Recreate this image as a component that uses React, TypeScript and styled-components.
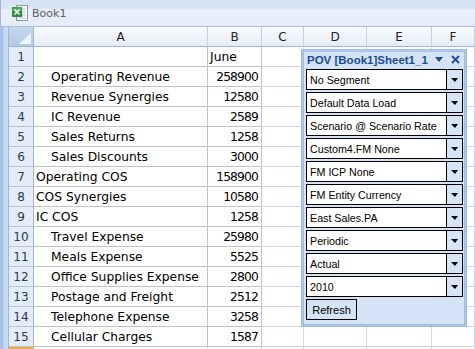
import React from 'react';
import styled, {createGlobalStyle} from "styled-components";

const GlobalStyle = createGlobalStyle`
body {
  margin: 0;
  overflow: hidden;
  background: #fff;
}
`

const Window = styled.div`
position: relative;
width: 475px;
height: 349px;
overflow: hidden;
display: flex;
flex-direction: column;
background: #fff;
font-family: "DejaVu Sans", sans-serif;
`

const TitleBar = styled.div`
height: 27px;
box-sizing: border-box;
flex-shrink: 0;
display: flex;
align-items: center;
gap: 4px;
padding-left: 11px;
border-left: 1px solid #a9b9ce;
border-bottom: 1px solid #a7bedd;
background: linear-gradient(#d6e3f4 0, #dbe6f5 34%, #e7eff9 38%, #e4edf8 100%);
`

const Caption = styled.span`
font-size: 11px;
color: #5a5f66;
padding-top: 1px;
`

const Body = styled.div`
flex: 1;
display: flex;
min-height: 0;
`

const Frame = styled.div`
width: 9px;
flex-shrink: 0;
box-sizing: border-box;
border-right: 1px solid #9eb6ce;
background: linear-gradient(to right, #b9cfee 0, #9dbbe6 1px, #a9c5ec 3px, #c6d9f1 4px, #c9dbf2 100%);
`

const Sheet = styled.div`
flex: 1;
display: grid;
grid-template-columns: 25px 174px 54px 42px 63px 65px 1fr;
grid-auto-rows: 20px;
`

const Corner = styled.div`
position: relative;
box-sizing: border-box;
border-right: 1px solid #9eb6ce;
border-bottom: 1px solid #9eb6ce;
background: linear-gradient(#c6d7ee, #b3c9e6);
`

const CornerMark = styled.div`
position: absolute;
right: 2px;
bottom: 2px;
width: 0;
height: 0;
border-left: 12px solid transparent;
border-bottom: 11px solid #eef3fa;
`

const ColHeader = styled.div`
box-sizing: border-box;
display: flex;
align-items: center;
justify-content: center;
border-right: 1px solid #c5d3e4;
border-bottom: 1px solid #9eb6ce;
background: linear-gradient(#fbfcfe 0, #f1f5fb 45%, #e4ebf5 100%);
font-size: 12px;
color: #222;
`

const RowHeader = styled.div<{ $selected?: boolean }>`
box-sizing: border-box;
display: flex;
align-items: center;
justify-content: center;
border-right: 1px solid #9eb6ce;
border-bottom: 1px solid #b4c6dc;
background: ${props => props.$selected ? 'linear-gradient(#f4a93e, #fbd58a)' : '#e4ecf7'};
font-size: 12px;
color: #253d54;
`

const Cell = styled.div<{ $lined?: boolean; $align?: string; $indent?: number; $num?: boolean }>`
box-sizing: border-box;
display: flex;
align-items: center;
justify-content: ${props => props.$align === 'right' ? 'flex-end' : 'flex-start'};
padding: 0 3px 0 ${props => 2 + (props.$indent || 0)}px;
border-right: 1px solid ${props => props.$lined ? '#c3c3c3' : '#d0d7e5'};
border-bottom: 1px solid ${props => props.$lined ? '#c3c3c3' : '#d0d7e5'};
font-size: 12.3px;
letter-spacing: ${props => props.$num ? '-0.85px' : '0'};
color: #000;
white-space: nowrap;
overflow: hidden;
`

const Pov = styled.div`
position: absolute;
left: 301px;
top: 49px;
width: 166px;
box-sizing: border-box;
border: 3px solid #a5bfe6;
border-top-color: #a9c3ea;
background: #d5e3f6;
padding: 0 1px 4px 2px;
display: flex;
flex-direction: column;
gap: 2px;
font-family: "Liberation Sans", Arial, sans-serif;
`

const PovTitle = styled.div`
height: 15px;
display: flex;
align-items: center;
padding-left: 1px;
font-size: 11.5px;
font-weight: bold;
color: #1c4b98;
white-space: nowrap;
`

const TitleText = styled.span`
flex: 1;
overflow: hidden;
`

const TitleIcons = styled.div`
display: flex;
align-items: center;
gap: 8px;
padding: 0 3px 0 4px;
`

const Combo = styled.div`
height: 21px;
box-sizing: border-box;
border: 1px solid #000;
background: #fff;
display: flex;
`

const ComboText = styled.div`
flex: 1;
display: flex;
align-items: center;
padding-left: 3px;
font-size: 10.7px;
color: #000;
white-space: nowrap;
overflow: hidden;
`

const ComboButton = styled.div`
width: 15px;
border-left: 1px solid #000;
background: #d6e4f7;
display: flex;
align-items: center;
justify-content: center;
`

const Caret = styled.div`
width: 0;
height: 0;
border-left: 4px solid transparent;
border-right: 3px solid transparent;
border-top: 4px solid #000;
margin-top: 1px;
`

const RefreshButton = styled.button`
align-self: flex-start;
width: 51px;
height: 21px;
box-sizing: border-box;
margin: 0;
padding: 0;
border: 1px solid #000;
background: #d5e3f6;
font-family: "Liberation Sans", Arial, sans-serif;
font-size: 11px;
color: #000;
`

const rows: [string, string, number][] = [
    ['', 'June', 0],
    ['Operating Revenue', '258900', 1],
    ['Revenue Synergies', '12580', 1],
    ['IC Revenue', '2589', 1],
    ['Sales Returns', '1258', 1],
    ['Sales Discounts', '3000', 1],
    ['Operating COS', '158900', 0],
    ['COS Synergies', '10580', 0],
    ['IC COS', '1258', 0],
    ['Travel Expense', '25980', 1],
    ['Meals Expense', '5525', 1],
    ['Office Supplies Expense', '2800', 1],
    ['Postage and Freight', '2512', 1],
    ['Telephone Expense', '3258', 1],
    ['Cellular Charges', '1587', 1],
]

const columns = ['A', 'B', 'C', 'D', 'E', 'F']

const povItems = [
    'No Segment',
    'Default Data Load',
    'Scenario @ Scenario Rate',
    'Custom4.FM None',
    'FM ICP None',
    'FM Entity Currency',
    'East Sales.PA',
    'Periodic',
    'Actual',
    '2010',
]

const ExcelIcon = () => (
    <svg width="16" height="16" viewBox="0 0 16 16">
        <rect x="4.5" y="0.5" width="11" height="15" fill="#fff" stroke="#8a9aae"/>
        <path d="M7 4h7M7 7h7M7 10h7M7 13h7M10 2v12" stroke="#b9c6d6" strokeWidth="1"/>
        <rect x="0" y="2" width="10" height="10" rx="1" fill="#2a8a3e"/>
        <rect x="0.5" y="2.5" width="9" height="4" fill="#4fae5c"/>
        <path d="M2.5 4.5l5 5M7.5 4.5l-5 5" stroke="#fff" strokeWidth="1.6"/>
    </svg>
)

const App = () => {
    return (
        <>
            <GlobalStyle/>
            <Window>
                <TitleBar>
                    <ExcelIcon/>
                    <Caption>Book1</Caption>
                </TitleBar>
                <Body>
                    <Frame/>
                    <Sheet>
                        <Corner><CornerMark/></Corner>
                        {columns.map(c => <ColHeader key={c}>{c}</ColHeader>)}
                        {rows.map(([label, value, indent], i) => (
                            <React.Fragment key={i}>
                                <RowHeader>{i + 1}</RowHeader>
                                <Cell $lined $indent={indent ? 15 : 0}>{label}</Cell>
                                <Cell $lined $align={i === 0 ? 'left' : 'right'} $num={i > 0}>{value}</Cell>
                                <Cell/>
                                <Cell/>
                                <Cell/>
                                <Cell/>
                            </React.Fragment>
                        ))}
                        <RowHeader $selected/>
                        <Cell/>
                        <Cell/>
                        <Cell/>
                        <Cell/>
                        <Cell/>
                        <Cell/>
                    </Sheet>
                </Body>
                <Pov>
                    <PovTitle>
                        <TitleText>POV [Book1]Sheet1_1</TitleText>
                        <TitleIcons>
                            <svg width="8" height="5" viewBox="0 0 8 5">
                                <path d="M0 0h8L4 5z" fill="#1c4b98"/>
                            </svg>
                            <svg width="9" height="9" viewBox="0 0 9 9">
                                <path d="M1 1l7 7M8 1L1 8" stroke="#1c4b98" strokeWidth="1.8"/>
                            </svg>
                        </TitleIcons>
                    </PovTitle>
                    {povItems.map(item => (
                        <Combo key={item}>
                            <ComboText>{item}</ComboText>
                            <ComboButton><Caret/></ComboButton>
                        </Combo>
                    ))}
                    <RefreshButton>Refresh</RefreshButton>
                </Pov>
            </Window>
        </>
    )
}

export default App;
